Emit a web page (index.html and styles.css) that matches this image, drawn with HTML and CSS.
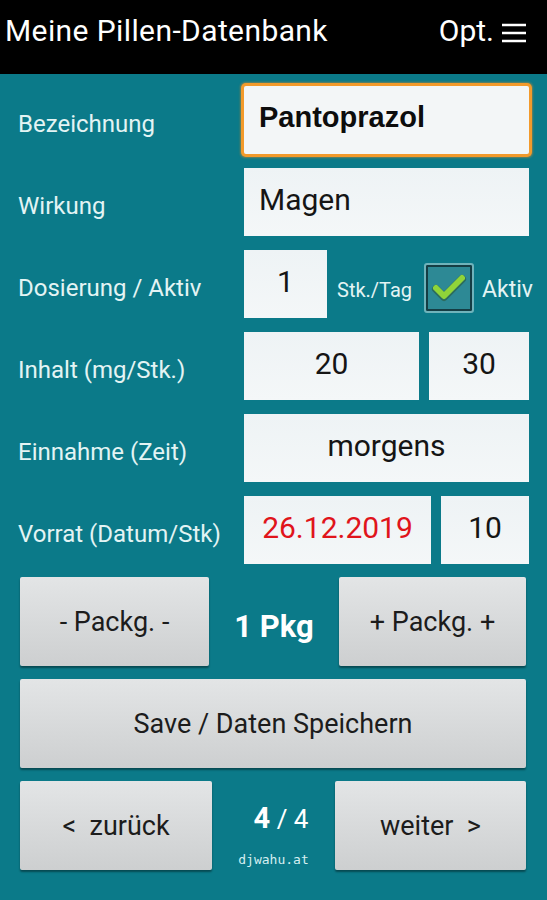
FILE: index.html
```html
<!DOCTYPE html>
<html lang="de">
<head>
<meta charset="utf-8">
<title>Meine Pillen-Datenbank</title>
<link rel="stylesheet" href="styles.css">
</head>
<body>
<header class="topbar">
  <div class="title">Meine Pillen-Datenbank</div>
  <div class="menu">Opt.
    <svg class="burger" width="24" height="20" viewBox="0 0 24 20"><path d="M0 2h24M0 10h24M0 18h24" stroke="#fff" stroke-width="2.4"/></svg>
  </div>
</header>
<main class="screen">
  <section class="form">
    <div class="row">
      <div class="label">Bezeichnung</div>
      <div class="field wide focused bold left">Pantoprazol</div>
    </div>
    <div class="row">
      <div class="label">Wirkung</div>
      <div class="field wide left">Magen</div>
    </div>
    <div class="row">
      <div class="label">Dosierung / Aktiv</div>
      <div class="field dose">1</div>
      <div class="unit">Stk./Tag</div>
      <div class="check">
        <svg width="36" height="30" viewBox="0 0 36 30"><path d="M5 16 L13 24 L31 6" fill="none" stroke="#2b4a1a" stroke-width="8" stroke-linecap="round" stroke-linejoin="round" opacity=".45"/><path d="M5 15 L13 23 L31 5" fill="none" stroke="#8fd43a" stroke-width="6" stroke-linecap="round" stroke-linejoin="round"/></svg>
      </div>
      <div class="aktiv">Aktiv</div>
    </div>
    <div class="row">
      <div class="label">Inhalt (mg/Stk.)</div>
      <div class="field mg">20</div>
      <div class="field qty">30</div>
    </div>
    <div class="row">
      <div class="label">Einnahme (Zeit)</div>
      <div class="field wide">morgens</div>
    </div>
    <div class="row">
      <div class="label">Vorrat (Datum/Stk)</div>
      <div class="field date red">26.12.2019</div>
      <div class="field stock">10</div>
    </div>
  </section>
  <section class="actions">
    <div class="btnrow">
      <button class="btn pk-l">- Packg. -</button>
      <div class="pkg">1 Pkg</div>
      <button class="btn pk-r">+ Packg. +</button>
    </div>
    <div class="btnrow">
      <button class="btn save">Save / Daten Speichern</button>
    </div>
    <div class="btnrow">
      <button class="btn nav-l">&lt;&nbsp; zurück</button>
      <div class="pager">
        <div class="count"><b>4</b> / 4</div>
        <div class="site">djwahu.at</div>
      </div>
      <button class="btn nav-r">weiter &nbsp;&gt;</button>
    </div>
  </section>
</main>
</body>
</html>
```

FILE: styles.css
```css
html, body {
  margin: 0;
  padding: 0;
}
body {
  width: 547px;
  height: 900px;
  background: #0b7a89;
  font-family: Roboto, "Noto Sans", sans-serif;
  overflow: hidden;
}
.topbar {
  height: 74px;
  background: #000;
  color: #fff;
  display: flex;
  justify-content: space-between;
  align-items: flex-start;
  padding: 13px 21px 0 5px;
  box-sizing: border-box;
}
.title {
  font-size: 30px;
  line-height: 36px;
  letter-spacing: 0.4px;
}
.menu {
  font-size: 30px;
  line-height: 36px;
  display: flex;
  align-items: center;
  gap: 8px;
}
.burger {
  display: block;
  margin-top: 4px;
}
.screen {
  background: #0b7a89;
}
.form {
  display: flex;
  flex-direction: column;
  gap: 12px;
  padding: 11px 18px 0 18px;
}
.row {
  display: flex;
  align-items: center;
  height: 70px;
}
.label {
  width: 226px;
  flex-shrink: 0;
  color: #e3f4f4;
  font-size: 24px;
  padding-top: 8px;
}
.field {
  flex-shrink: 0;
  height: 68px;
  background: linear-gradient(#eef3f5, #f4f7f8);
  display: flex;
  align-items: center;
  justify-content: center;
  font-size: 30px;
  color: #151515;
  box-sizing: border-box;
  padding-bottom: 5px;
}
.field.left {
  justify-content: flex-start;
  padding-left: 15px;
}
.field.bold {
  font-family: "Liberation Sans", Arial, sans-serif;
  font-weight: bold;
  font-size: 29px;
  color: #0d0d0d;
}
.wide {
  width: 285px;
}
.focused {
  border-radius: 2px;
  box-shadow: 0 0 0 3px #f29a2b, 0 0 2px 4px rgba(230, 140, 40, 0.45);
  background: #f3f6f7;
}
.dose {
  width: 83px;
}
.unit {
  flex-shrink: 0;
  margin-left: 10px;
  font-size: 20px;
  color: #e3f4f4;
  padding-top: 12px;
}
.check {
  flex-shrink: 0;
  margin-left: 12px;
  margin-top: 8px;
  width: 50px;
  height: 50px;
  box-sizing: border-box;
  border: 2px solid #6fb3bb;
  border-radius: 3px;
  background: #2d8995;
  box-shadow: inset 0 0 0 2px #153d44;
  display: flex;
  align-items: center;
  justify-content: center;
}
.aktiv {
  flex-shrink: 0;
  margin-left: 8px;
  font-size: 23px;
  color: #e3f4f4;
  padding-top: 10px;
}
.mg {
  width: 175px;
}
.qty {
  width: 100px;
  margin-left: 10px;
}
.date {
  width: 187px;
}
.stock {
  width: 88px;
  margin-left: 10px;
}
.red {
  color: #e0141b;
}
.actions {
  display: flex;
  flex-direction: column;
  gap: 13px;
  padding: 12px 21px 0 20px;
}
.btnrow {
  display: flex;
  align-items: stretch;
  height: 89px;
}
.btn {
  flex-shrink: 0;
  border: none;
  margin: 0;
  padding: 0;
  border-radius: 2px;
  background: linear-gradient(#e3e5e6, #cdcfd0);
  box-shadow: 0 2px 2px rgba(0, 0, 0, 0.4);
  font-family: Roboto, "Noto Sans", sans-serif;
  font-size: 27px;
  color: #1c1c1c;
}
.pk-l { width: 189px; }
.pk-r { width: 187px; }
.save { width: 506px; }
.nav-l { width: 192px; }
.nav-r { width: 191px; }
.pkg {
  flex: 1;
  display: flex;
  align-items: center;
  justify-content: center;
  color: #fff;
  font-weight: bold;
  font-size: 31px;
  padding-top: 10px;
}
.pager {
  flex: 1;
  display: flex;
  flex-direction: column;
  align-items: center;
  justify-content: flex-start;
  padding-top: 20px;
  color: #fff;
}
.count {
  font-size: 26px;
  line-height: 34px;
  margin-left: 15px;
}
.count b {
  font-size: 29px;
}
.site {
  margin-top: 16px;
  font-family: "DejaVu Sans Mono", "Liberation Mono", monospace;
  font-size: 13px;
  color: #d6eff1;
}
```
